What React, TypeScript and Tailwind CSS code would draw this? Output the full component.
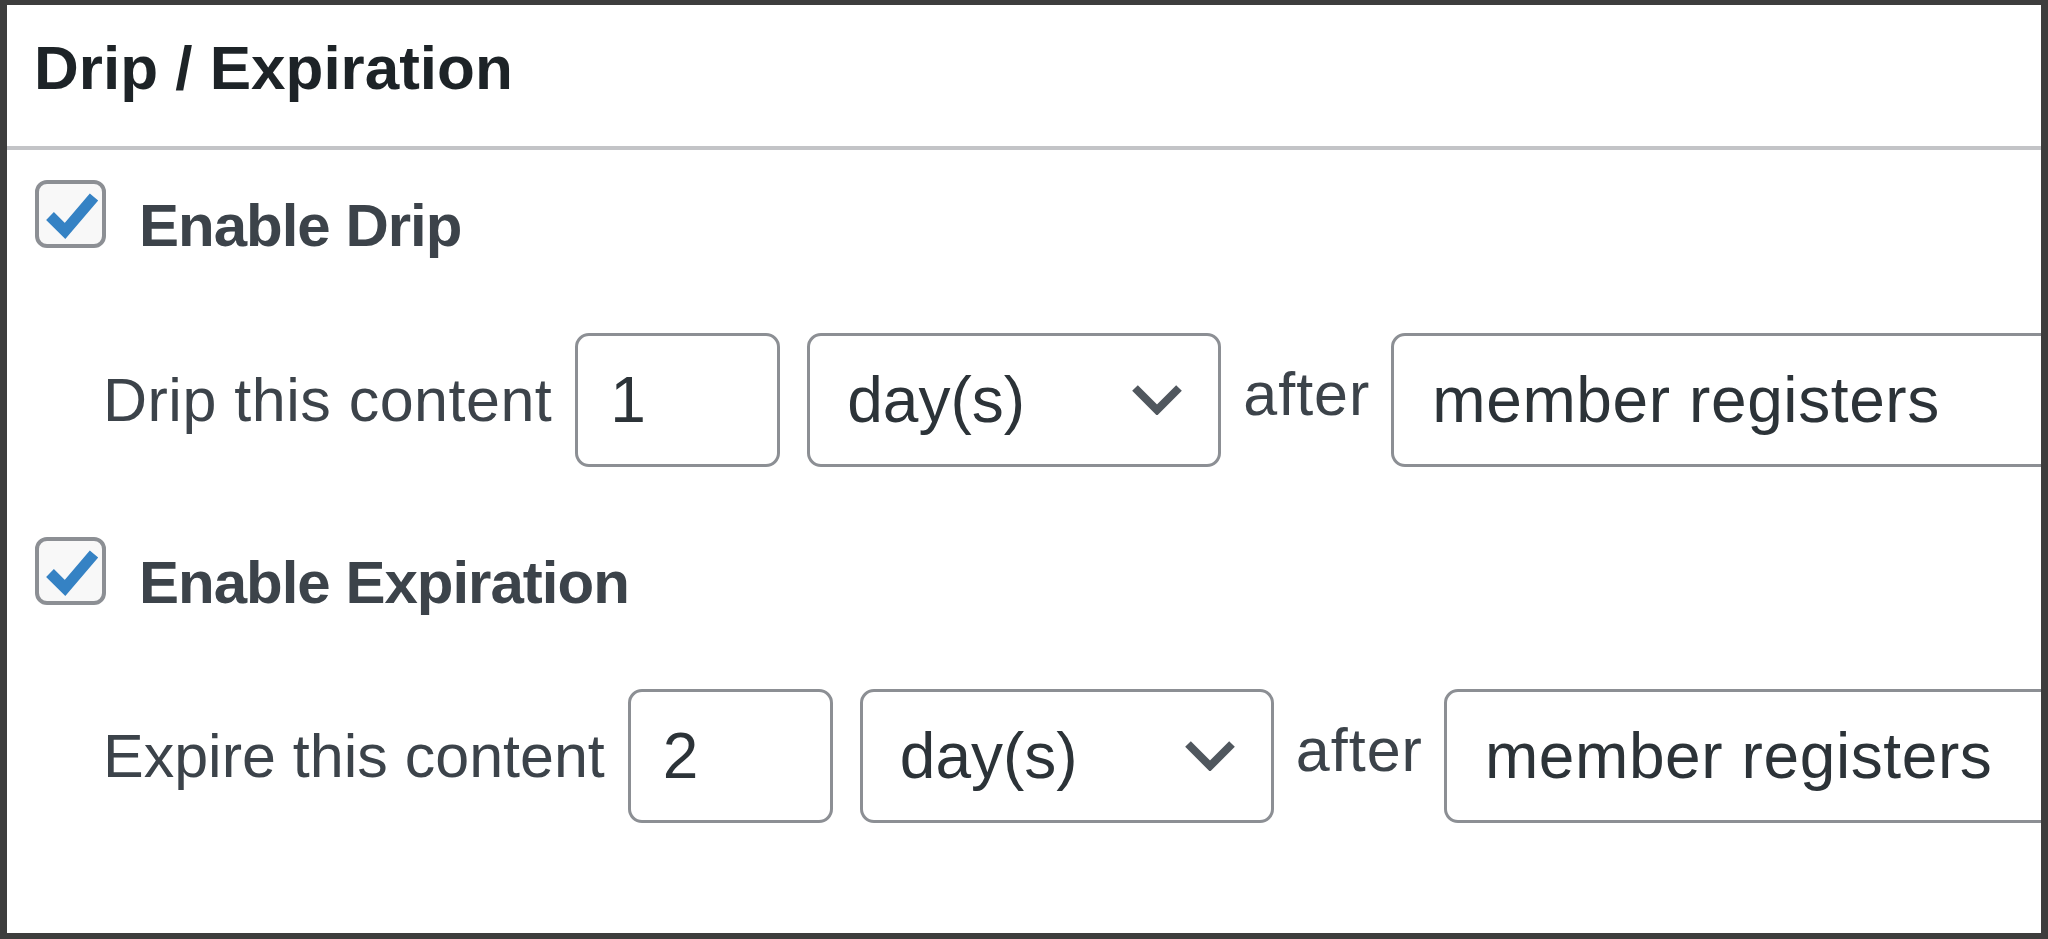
const FONT = "font-['Liberation_Sans',Arial,sans-serif]";

function CheckBox() {
  return (
    <div className="w-[71px] h-[68px] shrink-0 rounded-[12px] border-[4px] border-[#8c8f94] bg-[#f8f8f8] flex items-center justify-center">
      <svg width="63" height="60" viewBox="0 0 63 60">
        <polyline points="11,32 26,47 55,13" fill="none" stroke="#3582c4" strokeWidth="11" strokeLinejoin="miter" />
      </svg>
    </div>
  );
}

function Chevron() {
  return (
    <svg width="50" height="30" viewBox="0 0 50 30" className="shrink-0">
      <polyline points="3,3 25,25 47,3" fill="none" stroke="#50575e" strokeWidth="8" />
    </svg>
  );
}

function ToggleRow({ label }: { label: string }) {
  return (
    <div className="flex items-start h-[68px]">
      <CheckBox />
      <span className="ml-[33px] mt-[16px] text-[60px] leading-none font-bold tracking-[-1px] text-[#3c434a] whitespace-nowrap">
        {label}
      </span>
    </div>
  );
}

function ScheduleRow({ label, amount, tight }: { label: string; amount: string; tight?: boolean }) {
  return (
    <div className="flex items-center h-[134px] ml-[68px]">
      <span className={`text-[61px] leading-none text-[#3c434a] whitespace-nowrap ${tight ? 'tracking-[0px]' : 'tracking-[0.5px]'}`}>{label}</span>
      <div className="ml-[23px] w-[205px] h-full shrink-0 rounded-[14px] border-[3px] border-[#8c8f94] bg-white flex items-center pl-[32px]">
        <span className="text-[64px] leading-none text-[#2c3338]">{amount}</span>
      </div>
      <div className="ml-[27px] w-[414px] h-full shrink-0 rounded-[14px] border-[3px] border-[#8c8f94] bg-white flex items-center justify-between pl-[37px] pr-[36px]">
        <span className="text-[64px] leading-none text-[#2c3338]">day(s)</span>
        <Chevron />
      </div>
      <span className="ml-[22px] mb-[11px] text-[61px] leading-none tracking-[1px] text-[#3c434a]">after</span>
      <div className="ml-[21px] w-[800px] h-full shrink-0 rounded-[14px] border-[3px] border-[#8c8f94] bg-white flex items-center pl-[38px]">
        <span className="text-[64px] leading-none tracking-[0.6px] text-[#2c3338] whitespace-nowrap">member registers</span>
      </div>
    </div>
  );
}

export default function App() {
  return (
    <div className={`${FONT} w-[2048px] h-[939px] bg-white border-t-[5px] border-b-[6px] border-x-[7px] border-[#3d3d3d] overflow-hidden flex flex-col`}>
      {/* header */}
      <div className="h-[145px] shrink-0 border-b-[4px] border-[#c3c4c7] pl-[27px] pt-[32px]">
        <h2 className="text-[62px] leading-none font-bold text-[#1d2327] whitespace-nowrap">Drip / Expiration</h2>
      </div>

      <div className="pt-[30px] pl-[28px] flex flex-col">
        <ToggleRow label="Enable Drip" />
        <div className="mt-[85px]">
          <ScheduleRow label="Drip this content" amount="1" />
        </div>
        <div className="mt-[70px]">
          <ToggleRow label="Enable Expiration" />
        </div>
        <div className="mt-[84px]">
          <ScheduleRow label="Expire this content" amount="2" tight />
        </div>
      </div>
    </div>
  );
}
